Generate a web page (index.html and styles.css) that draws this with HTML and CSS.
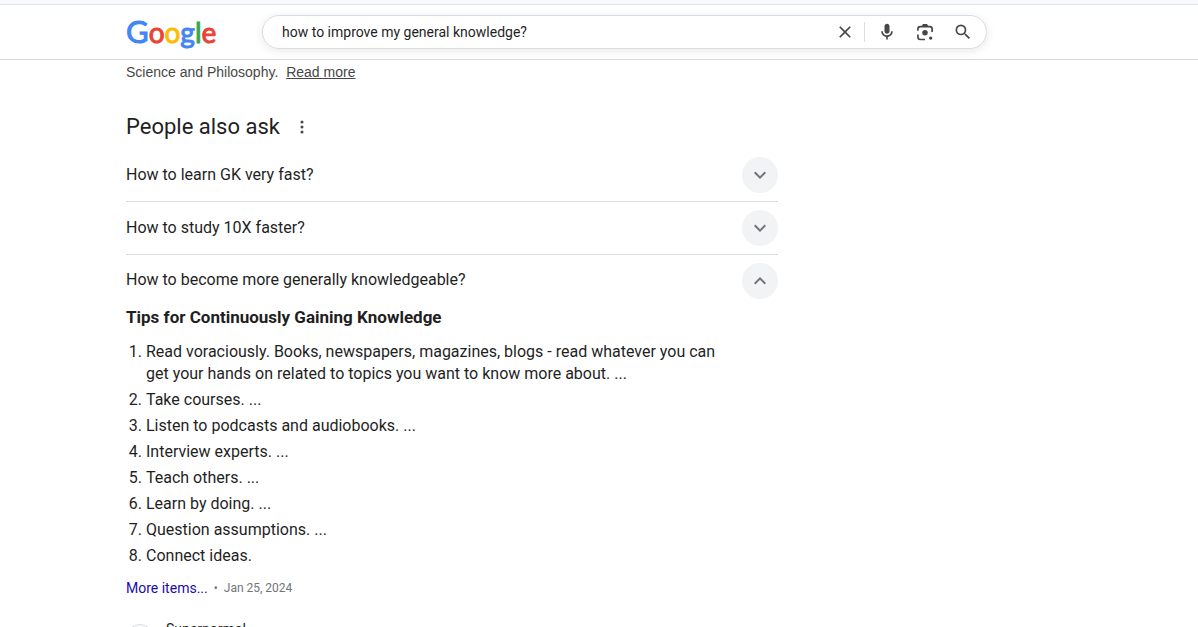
FILE: index.html
```
<!DOCTYPE html>
<html lang="en">
<head>
    <meta charset="UTF-8">
    <meta name="viewport" content="width=device-width, initial-scale=1">
    <title>how to improve my general knowledge? - Google Search</title>
    <link rel="stylesheet" href="styles.css">
</head>
<body>
    <header class="header">
        <a class="logo" href="#" aria-label="Google"><span class="blue capital">G</span><span class="red">o</span><span class="yellow">o</span><span class="blue">g</span><span class="green">l</span><span class="red">e</span></a>
        <form class="search-box" role="search">
            <input class="search-input" type="text" aria-label="Search" value="how to improve my general knowledge?">
            <button class="icon-btn clear-btn" type="button" aria-label="Clear">
                <svg viewBox="0 0 24 24" width="20" height="20"><path d="M19 6.41L17.59 5 12 10.59 6.41 5 5 6.41 10.59 12 5 17.59 6.41 19 12 13.41 17.59 19 19 17.59 13.41 12z"/></svg>
            </button>
            <button class="icon-btn" type="button" aria-label="Search by voice">
                <svg viewBox="0 0 24 24" width="20" height="20"><path d="M12 14c1.66 0 3-1.34 3-3V5c0-1.66-1.34-3-3-3S9 3.34 9 5v6c0 1.66 1.34 3 3 3z"/><path d="M17 11c0 2.76-2.24 5-5 5s-5-2.24-5-5H5c0 3.53 2.61 6.43 6 6.92V21h2v-3.08c3.39-.49 6-3.39 6-6.92h-2z"/></svg>
            </button>
            <button class="icon-btn" type="button" aria-label="Search by image">
                <svg viewBox="0 0 24 24" width="20" height="20"><g fill="none" stroke="#474747" stroke-width="2"><path d="M3.500 10.500V8.500a3 3 0 0 1 3-3h11a3 3 0 0 1 3 3v3.500"/><path d="M3.500 15v3a3 3 0 0 0 3 3H12"/></g><path d="M8 5l1.500-2.500h5L16 5z"/><circle cx="12" cy="13" r="3.300"/><circle cx="18.800" cy="19.300" r="2"/></svg>
            </button>
            <button class="icon-btn" type="submit" aria-label="Search">
                <svg viewBox="0 0 24 24" width="20" height="20"><path d="M15.500 14h-.79l-.28-.27A6.471 6.471 0 0 0 16 9.500 6.500 6.500 0 1 0 9.500 16c1.610 0 3.090-.59 4.230-1.570l.27.28v.79l5 4.990L20.490 19l-4.990-5zm-6 0C7.010 14 5 11.990 5 9.500S7.010 5 9.500 5 14 7.010 14 9.500 11.990 14 9.500 14z"/></svg>
            </button>
        </form>
    </header>

    <main class="results">
        <p class="snippet">Science and Philosophy. <a href="#">Read more</a></p>

        <section class="also-ask">
            <div class="also-ask-title">
                <h2>People also ask</h2>
                <button class="menu-btn" type="button" aria-label="About this result">
                    <svg viewBox="0 0 18 18" width="18" height="18"><circle cx="9" cy="4" r="1.500"/><circle cx="9" cy="9" r="1.500"/><circle cx="9" cy="14" r="1.500"/></svg>
                </button>
            </div>

            <button class="question" type="button" aria-expanded="false">
                <span class="question-text">How to learn GK very fast?</span>
                <span class="chevron"><svg viewBox="0 0 24 24" width="24" height="24"><path d="M7.410 8.590L12 13.170l4.590-4.580L18 10l-6 6-6-6z"/></svg></span>
            </button>
            <button class="question" type="button" aria-expanded="false">
                <span class="question-text">How to study 10X faster?</span>
                <span class="chevron"><svg viewBox="0 0 24 24" width="24" height="24"><path d="M7.410 8.590L12 13.170l4.590-4.580L18 10l-6 6-6-6z"/></svg></span>
            </button>
            <button class="question" type="button" aria-expanded="true">
                <span class="question-text">How to become more generally knowledgeable?</span>
                <span class="chevron"><svg viewBox="0 0 24 24" width="24" height="24"><path d="M7.410 15.410L12 10.830l4.590 4.580L18 14l-6-6-6 6z"/></svg></span>
            </button>

            <div class="answer">
                <h3>Tips for Continuously Gaining Knowledge</h3>
                <ol>
                    <li>Read voraciously. Books, newspapers, magazines, blogs - read whatever you can get your hands on related to topics you want to know more about. ...</li>
                    <li>Take courses. ...</li>
                    <li>Listen to podcasts and audiobooks. ...</li>
                    <li>Interview experts. ...</li>
                    <li>Teach others. ...</li>
                    <li>Learn by doing. ...</li>
                    <li>Question assumptions. ...</li>
                    <li>Connect ideas.</li>
                </ol>
                <p class="more"><a href="#">More items...</a><span class="dot">•</span><span class="date">Jan 25, 2024</span></p>
                <a class="source" href="#">
                    <span class="favicon"></span>
                    <span>Supernormal</span>
                </a>
            </div>
        </section>
    </main>
</body>
</html>
```

FILE: styles.css
```
* {
    box-sizing: border-box;
}

body {
    margin: 0;
    height: 100vh;
    overflow: hidden;
    background: #fff;
    color: #1f1f1f;
    font-family: Roboto, sans-serif;
    font-size: 16px;
}

button {
    border: 0;
    padding: 0;
    background: none;
    color: inherit;
    font: inherit;
    cursor: pointer;
}

svg {
    display: block;
    fill: #474747;
}

h2, h3, p, ol {
    margin: 0;
    font-weight: 400;
}

.header {
    display: flex;
    align-items: center;
    height: 60px;
    padding: 0 24px 0 126px;
    border-top: 4px solid #f8f9ff;
    border-bottom: 1px solid #dadce0;
    box-shadow: inset 0 1px #e0e2ee;
}

.logo {
    width: 136px;
    font-family: Lato, sans-serif;
    font-size: 28px;
    line-height: 40px;
    text-decoration: none;
    -webkit-text-stroke: 1px currentColor;
}

.capital {
    font-size: 31px;
}

.blue { color: #4285f4; }
.red { color: #ea4335; }
.yellow { color: #fbbc05; }
.green { color: #34a853; }

.search-box {
    display: flex;
    align-items: center;
    flex: 0 1 725px;
    height: 34px;
    padding: 0 4px 0 19px;
    border: 1px solid #dadce0;
    border-radius: 17px;
    box-shadow: 0 2px 8px rgba(60, 64, 67, 0.12);
}

.search-input {
    flex: 1;
    min-width: 0;
    padding: 0;
    border: 0;
    outline: 0;
    background: none;
    color: #1f1f1f;
    font-family: inherit;
    font-size: 14px;
}

.icon-btn {
    display: flex;
    justify-content: center;
    width: 38px;
}

.clear-btn {
    width: 40px;
    border-right: 1px solid #dadce0;
    margin-right: 3px;
}

.results {
    max-width: 778px;
    padding-left: 126px;
}

.snippet {
    padding-top: 1px;
    color: #474747;
    font-family: "Liberation Sans", Arial, sans-serif;
    font-size: 14px;
    line-height: 22px;
}

.snippet a {
    margin-left: 4px;
    color: #474747;
}

.also-ask-title {
    display: flex;
    align-items: center;
    gap: 13px;
    padding: 30px 0 8px;
}

.also-ask-title h2 {
    font-size: 22px;
    line-height: 28px;
}

.question {
    display: flex;
    align-items: center;
    justify-content: space-between;
    width: 100%;
    height: 53px;
    border-bottom: 1px solid #dadce0;
    text-align: left;
}

.question[aria-expanded="true"] {
    height: 51px;
    border-bottom: 0;
}

.question-text {
    padding-bottom: 2px;
}

.chevron {
    display: flex;
    align-items: center;
    justify-content: center;
    width: 36px;
    height: 36px;
    border-radius: 50%;
    background: #f1f3f4;
}

.chevron svg {
    fill: #70757a;
}

.answer h3 {
    font-size: 17px;
    font-weight: 700;
    line-height: 22px;
}

.answer ol {
    padding: 13px 40px 0 20px;
}

.answer li {
    margin-bottom: 4px;
    line-height: 22px;
}

.more {
    display: flex;
    align-items: center;
    padding-top: 6px;
    color: #70757a;
    font-size: 12px;
    line-height: 22px;
}

.more a {
    color: #1a0dab;
    font-size: 14px;
    text-decoration: none;
}

.dot {
    padding: 0 6px;
}

.source {
    display: flex;
    gap: 12px;
    padding-top: 22px;
    color: #1f1f1f;
    font-size: 14px;
    line-height: 16px;
    text-decoration: none;
}

.favicon {
    width: 28px;
    height: 28px;
    margin-top: 3px;
    border: 1px solid #dadce0;
    border-radius: 50%;
    background: #f8f9fa;
}
```
